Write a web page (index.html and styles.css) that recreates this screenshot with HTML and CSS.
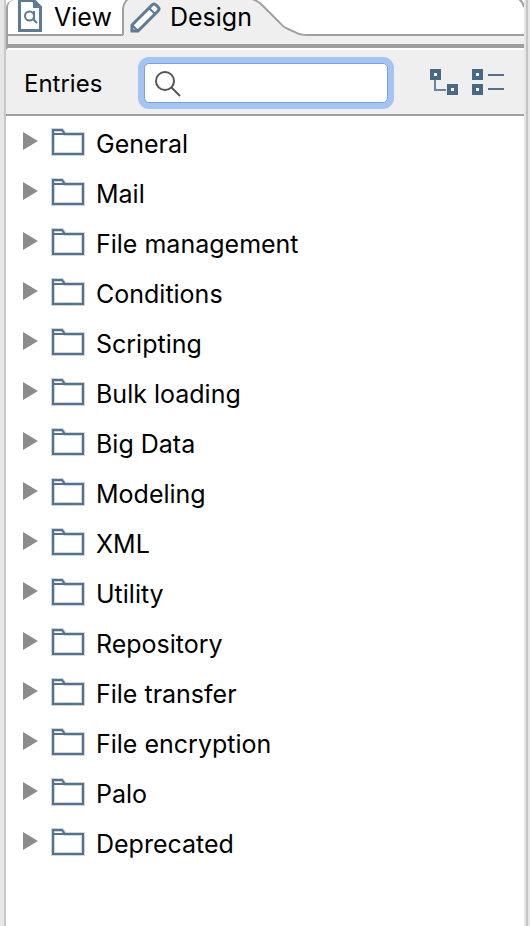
FILE: index.html
```html
<!DOCTYPE html>
<html lang="en">
<head>
<meta charset="utf-8">
<title>Entries</title>
<link rel="stylesheet" href="styles.css">
</head>
<body>
<svg class="defs" aria-hidden="true">
  <symbol id="folder" viewBox="0 0 36 30">
    <path d="M2 27V3H11L14 7H32V27Z" fill="#fff" stroke="#ccd6df" stroke-width="4"/>
    <path d="M2 27V3H11L14 7H32V27ZM2 7H14" fill="none" stroke="#55718c" stroke-width="2"/>
  </symbol>
  <symbol id="arrow" viewBox="0 0 16 18"><path d="M0 0L15 9L0 18Z" fill="#8c8c8c"/></symbol>
</svg>
<div class="window">
<main class="panel">
  <nav class="tabs">
    <button class="tab view" type="button">
      <svg class="page-icon" width="26" height="34" viewBox="0 0 26 34" aria-hidden="true">
        <path d="M2.500 .5H17L23.500 7V30.500H2.500Z" fill="#fff" stroke="#5f7a94" stroke-width="3"/>
        <path d="M16 0V8H24Z" fill="#5f7a94"/>
        <circle cx="12.500" cy="16" r="4.500" fill="none" stroke="#5f7a94" stroke-width="2"/>
        <path d="M17 11V20L20 23" fill="none" stroke="#5f7a94" stroke-width="2"/>
      </svg>
      <span>View</span>
    </button>
    <button class="tab design" type="button">
      <svg class="tab-shape" width="186" height="36" viewBox="0 0 186 36" aria-hidden="true">
        <path d="M1 36V8Q2 2 6 -1H130Q136 1 140 5L157 22Q161 27 166 29L173 32Q177 35 186 35V36Z" fill="#efefef"/>
        <path d="M1 35V8Q2 2 6 -1M130 -1Q136 1 140 5L157 22Q161 27 166 29L173 32Q177 35 186 35" fill="none" stroke="#a0a0a0" stroke-width="2"/>
      </svg>
      <svg class="pencil-icon" width="32" height="32" viewBox="0 0 32 32" aria-hidden="true">
        <path d="M2 30V24L22 4Q24 2 26 4L28 6Q30 8 28 10L8 30Z" fill="#fff" stroke="#5f7a94" stroke-width="3"/>
        <path d="M19 7L25 13M2 24L8 30" fill="none" stroke="#5f7a94" stroke-width="2"/>
      </svg>
      <span>Design</span>
    </button>
    <svg class="corner" width="8" height="8" viewBox="0 0 8 8" aria-hidden="true"><path d="M3 -1Q7 2 8 7" fill="none" stroke="#a0a0a0" stroke-width="2"/></svg>
  </nav>
  <div class="divider"></div>
  <div class="toolbar">
    <label for="search">Entries</label>
    <div class="search">
      <svg width="28" height="28" viewBox="0 0 28 28" aria-hidden="true"><circle cx="12" cy="12" r="9" fill="none" stroke="#555" stroke-width="2"/><path d="M18 18L27 27" stroke="#555" stroke-width="2"/></svg>
      <input id="search" type="text">
    </div>
    <div class="actions">
      <button type="button" aria-label="Expand all">
        <svg width="30" height="28" viewBox="0 0 30 28" aria-hidden="true">
          <path d="M6 11V22H17" fill="none" stroke="#6b849b" stroke-width="2"/>
          <g fill="#fff" stroke="#4a6785" stroke-width="4"><rect x="3" y="3" width="7" height="7"/><rect x="20" y="18" width="7" height="7"/></g>
        </svg>
      </button>
      <button type="button" aria-label="Collapse all">
        <svg width="34" height="28" viewBox="0 0 34 28" aria-hidden="true">
          <g fill="#fff" stroke="#4a6785" stroke-width="4"><rect x="3" y="3" width="7" height="7"/><rect x="3" y="18" width="7" height="7"/></g>
          <path d="M17 7H33M17 21H33" stroke="#55718c" stroke-width="2"/>
        </svg>
      </button>
    </div>
  </div>
  <ul class="tree">
    <li><button type="button"><svg class="arrow"><use href="#arrow"/></svg><svg class="folder"><use href="#folder"/></svg><span>General</span></button></li>
    <li><button type="button"><svg class="arrow"><use href="#arrow"/></svg><svg class="folder"><use href="#folder"/></svg><span>Mail</span></button></li>
    <li><button type="button"><svg class="arrow"><use href="#arrow"/></svg><svg class="folder"><use href="#folder"/></svg><span>File management</span></button></li>
    <li><button type="button"><svg class="arrow"><use href="#arrow"/></svg><svg class="folder"><use href="#folder"/></svg><span>Conditions</span></button></li>
    <li><button type="button"><svg class="arrow"><use href="#arrow"/></svg><svg class="folder"><use href="#folder"/></svg><span>Scripting</span></button></li>
    <li><button type="button"><svg class="arrow"><use href="#arrow"/></svg><svg class="folder"><use href="#folder"/></svg><span>Bulk loading</span></button></li>
    <li><button type="button"><svg class="arrow"><use href="#arrow"/></svg><svg class="folder"><use href="#folder"/></svg><span>Big Data</span></button></li>
    <li><button type="button"><svg class="arrow"><use href="#arrow"/></svg><svg class="folder"><use href="#folder"/></svg><span>Modeling</span></button></li>
    <li><button type="button"><svg class="arrow"><use href="#arrow"/></svg><svg class="folder"><use href="#folder"/></svg><span>XML</span></button></li>
    <li><button type="button"><svg class="arrow"><use href="#arrow"/></svg><svg class="folder"><use href="#folder"/></svg><span>Utility</span></button></li>
    <li><button type="button"><svg class="arrow"><use href="#arrow"/></svg><svg class="folder"><use href="#folder"/></svg><span>Repository</span></button></li>
    <li><button type="button"><svg class="arrow"><use href="#arrow"/></svg><svg class="folder"><use href="#folder"/></svg><span>File transfer</span></button></li>
    <li><button type="button"><svg class="arrow"><use href="#arrow"/></svg><svg class="folder"><use href="#folder"/></svg><span>File encryption</span></button></li>
    <li><button type="button"><svg class="arrow"><use href="#arrow"/></svg><svg class="folder"><use href="#folder"/></svg><span>Palo</span></button></li>
    <li><button type="button"><svg class="arrow"><use href="#arrow"/></svg><svg class="folder"><use href="#folder"/></svg><span>Deprecated</span></button></li>
  </ul>
</main>
</div>
</body>
</html>
```
FILE: styles.css
```css
* { box-sizing: border-box; }
body {
  margin: 0;
  font: 25px/32px Inter, "Liberation Sans", sans-serif;
  color: #000;
  background: #e6e6e6;
}
button {
  margin: 0;
  padding: 0;
  border: 0;
  background: none;
  font: inherit;
  color: inherit;
  text-align: left;
}
svg { display: block; flex: none; }
.defs { position: absolute; width: 0; height: 0; }
.window {
  min-height: 100vh;
  margin: 0 2px 0 4px;
  padding-right: 2px;
  border-left: 2px solid #c8c8c8;
  border-right: 2px solid #c4c4c4;
  display: flex;
}
.panel { flex: 1; min-width: 0; background: #fff; }

.tabs {
  position: relative;
  display: flex;
  height: 36px;
  overflow: hidden;
  background: linear-gradient(#a0a0a0, #a0a0a0) bottom / 100% 2px no-repeat #fff;
}
.tab { display: flex; align-items: center; height: 36px; }
.view {
  width: 116px;
  padding: 0 0 2px 9px;
  gap: 11px;
  border-left: 2px solid #a0a0a0;
  border-top-left-radius: 8px;
}
.design {
  position: relative;
  width: 186px;
  padding: 0 0 2px 8px;
  gap: 8px;
}
.tab-shape { position: absolute; left: 0; top: 0; }
.pencil-icon, .design span { position: relative; }
.corner { position: absolute; right: 0; top: 0; }
.divider {
  height: 14px;
  border-left: 2px solid #a0a0a0;
  border-bottom: 2px solid #fff;
  background: linear-gradient(#efefef 8px, #9e9e9e 8px);
}

.toolbar {
  display: flex;
  align-items: center;
  height: 66px;
  padding: 2px 19px 0 18px;
  background: #efefef;
  border-bottom: 2px solid #9f9f9f;
}
.toolbar label { width: 120px; padding-top: 2px; font-size: 24px; }
.search {
  display: flex;
  align-items: center;
  flex: 1;
  min-width: 0;
  height: 40px;
  padding: 0 8px;
  border: 1px solid #7ba1d8;
  border-radius: 5px;
  background: #fff;
  box-shadow: 0 0 0 6px #a4c5f3;
}
.search input {
  flex: 1;
  min-width: 0;
  height: 36px;
  border: 0;
  outline: 0;
  background: none;
  font: inherit;
}
.actions { display: flex; gap: 12px; margin: 0 0 2px 41px; }

.tree { margin: 0; padding: 2px 0; list-style: none; }
.tree button {
  display: flex;
  align-items: center;
  width: 100%;
  height: 50px;
  padding-left: 17px;
}
.tree span { padding-top: 2px; }
.arrow { width: 16px; height: 18px; margin: 0 12px 4px 0; }
.folder { width: 36px; height: 30px; margin: 0 9px 2px 0; }
```
